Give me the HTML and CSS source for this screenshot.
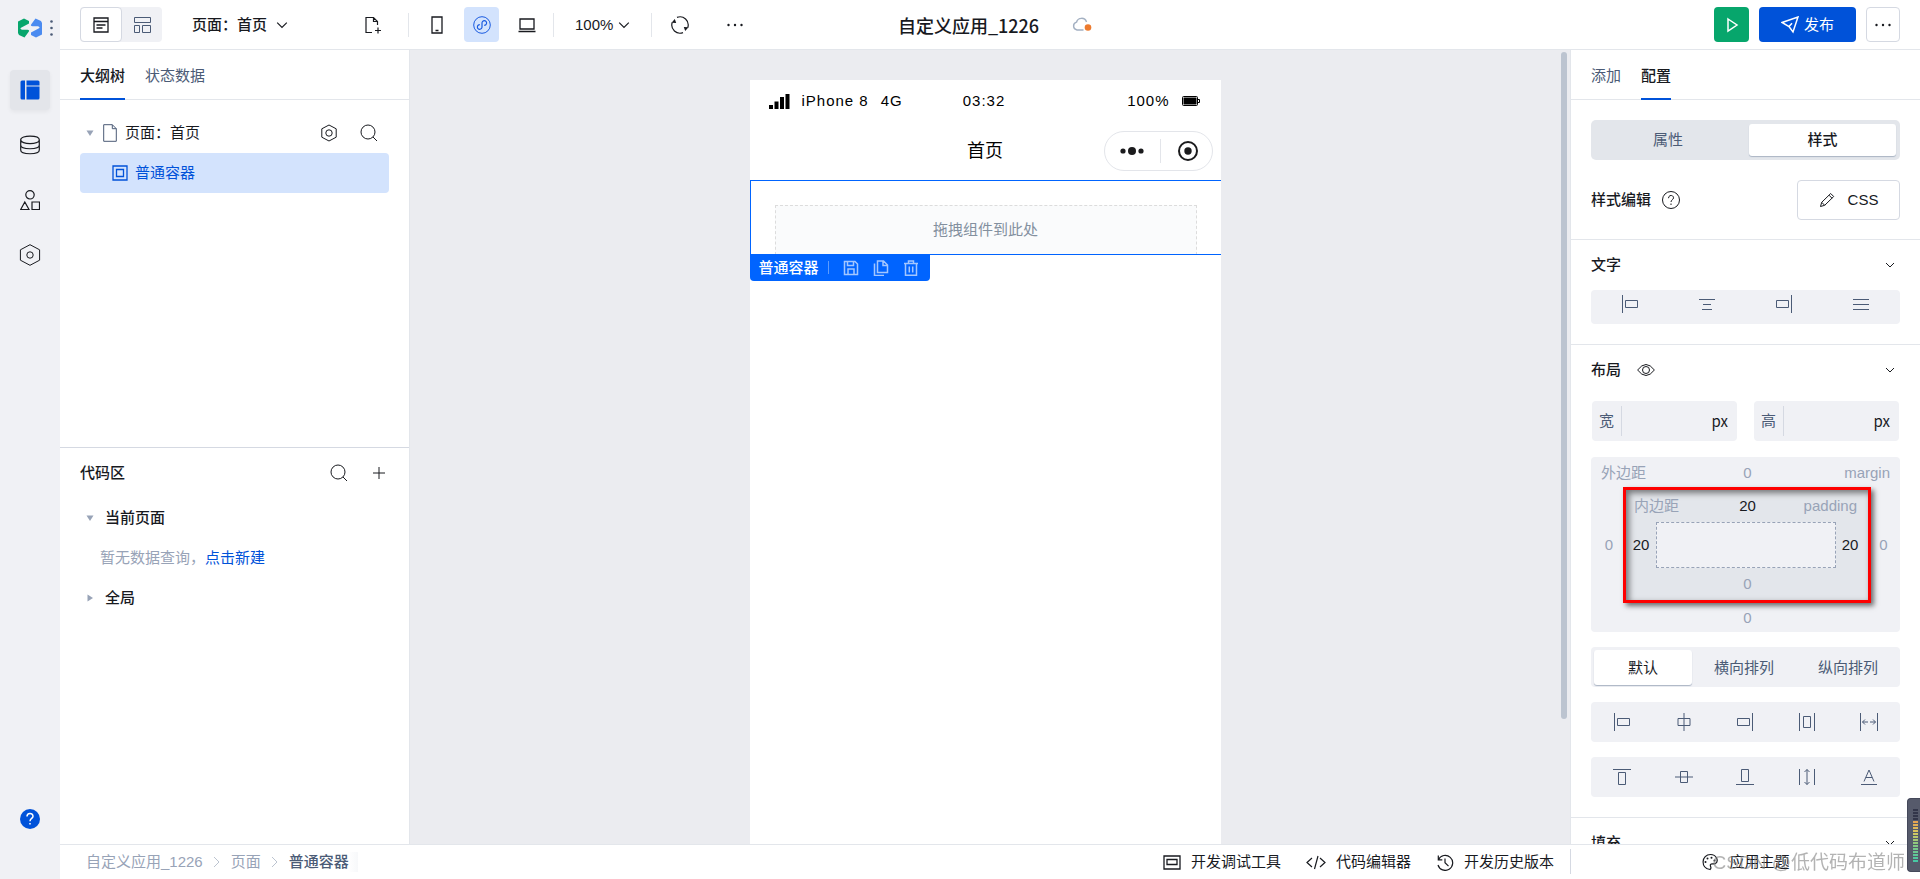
FILE: index.html
```html
<!DOCTYPE html>
<html lang="zh-CN">
<head>
<meta charset="utf-8">
<title>自定义应用_1226</title>
<link rel="stylesheet" href="styles.css">
</head>
<body>
<svg class="sprite" aria-hidden="true">
  <symbol id="chevron" viewBox="0 0 10 10"><path d="M1 3l4 4 4-4"/></symbol>
  <symbol id="crumb" viewBox="0 0 10 14"><path d="M2 2l5 5-5 5"/></symbol>
  <symbol id="search" viewBox="0 0 18 18"><circle cx="8" cy="8" r="7"/><path d="M13 13l4 4"/></symbol>
  <symbol id="more" viewBox="0 0 18 18"><g fill="currentColor" stroke="none"><circle cx="2.500" cy="9" r="1.200"/><circle cx="9" cy="9" r="1.200"/><circle cx="15.500" cy="9" r="1.200"/></g></symbol>
  <symbol id="caret-down" viewBox="0 0 8 8"><path fill="currentColor" stroke="none" d="M.5 1.500h7L4 7z"/></symbol>
  <symbol id="caret-right" viewBox="0 0 8 8"><path fill="currentColor" stroke="none" d="M1.500.5v7L7 4z"/></symbol>
  <symbol id="al-left" viewBox="0 0 18 18"><path d="M1.500 0v18M4.500 5.500h12v7h-12z"/></symbol>
  <symbol id="al-right" viewBox="0 0 18 18"><path d="M16.500 0v18M1.500 5.500h12v7h-12z"/></symbol>
</svg>
<div class="app">
  <nav class="rail" aria-label="主导航">
    <div class="brand">
      <svg class="logo" viewBox="0 0 24 20"><path id="half" fill="#07a66c" d="M0 3.500L6 .5 11 3v2.500L3 9.800q-1.500 1.200 1 2h5.500q2.500.4 1.200 2L6.500 19.500 1 17l-1-2z"/><path fill="#4b8bf0" transform="rotate(180 12 10)" d="M0 3.500L6 .5 11 3v2.500L3 9.800q-1.500 1.200 1 2h5.500q2.500.4 1.200 2L6.500 19.500 1 17l-1-2z"/></svg>
      <svg class="dots" viewBox="0 0 3 16"><circle cx="1.500" cy="1.500" r="1.300"/><circle cx="1.500" cy="8" r="1.300"/><circle cx="1.500" cy="14.500" r="1.300"/></svg>
    </div>
    <button class="tile tile-on" aria-label="页面设计"><svg class="i20" viewBox="0 0 20 20"><path fill="#0052d9" stroke="none" d="M2 .5h3v19H2a1.500 1.500 0 0 1-1.500-1.500V2A1.500 1.500 0 0 1 2 .5zM6.500.5H18A1.500 1.500 0 0 1 19.500 2v3.500h-13zM6.500 6.500h13V18a1.500 1.500 0 0 1-1.500 1.500H6.500z"/></svg></button>
    <button class="tile" aria-label="数据源"><svg class="i20" viewBox="0 0 20 20"><path stroke-width="1.200" d="M.7 4.800c0-5 18.600-5 18.600 0s-18.600 5-18.600 0zM.7 4.800v10.200c0 5 18.600 5 18.600 0V4.800M.7 10c0 5 18.600 5 18.600 0"/></svg></button>
    <button class="tile" aria-label="组件"><svg class="i20" viewBox="0 0 20 20"><path stroke-width="1.200" d="M10 .6a4.200 4.200 0 1 1 0 8.400 4.200 4.200 0 1 1 0-8.400zM.7 19.500L4.800 12l4.200 7.500zM12 12h7.500v7.500H12z"/></svg></button>
    <button class="tile" aria-label="设置"><svg class="i22" viewBox="0 0 22 22"><path d="M11 .7l9.600 5.100v10.400L11 21.300l-9.600-5.100V5.800z"/><circle cx="11" cy="11" r="3.200"/></svg></button>
    <button class="help" aria-label="帮助"><svg class="i20" viewBox="0 0 20 20"><circle cx="10" cy="10" r="10" fill="#0052d9" stroke="none"/><path stroke="#fff" stroke-width="1.500" d="M7 7.500c0-4 6-4 6-.3 0 2.200-3 2.300-3 5M10 14v1.600"/></svg></button>
  </nav>

  <header class="topbar">
    <div class="top-left">
      <div class="toggle">
        <button class="tg tg-on" aria-label="编辑"><svg class="i16" viewBox="0 0 16 16"><path stroke-width="1.300" d="M1 1h14v14H1zM1 4.500h14M3.500 8h9M3.500 11h6"/></svg></button>
        <button class="tg" aria-label="布局"><svg class="i18" viewBox="0 0 18 18"><path d="M1.500 1.500h16v5h-16zM1.500 9.500h5v7h-5zM9.500 9.500h8v7h-8z"/></svg></button>
      </div>
      <button class="page-pick">页面：首页<svg class="i12"><use href="#chevron"/></svg></button>
      <button class="sq" aria-label="新建页面"><svg class="i18" viewBox="0 0 18 18"><path stroke-width="1.200" d="M8 16.500H2v-15h7.500l4 4V9M9.500 1.500v4h4M14 11.500v6M11 14.500h6"/></svg></button>
      <span class="bar"></span>
      <div class="devices">
        <button class="sq" aria-label="手机"><svg class="i18" viewBox="0 0 18 18"><path stroke-width="1.300" d="M4 1h10v16H4zM7.500 14.500h3"/></svg></button>
        <button class="sq sq-on" aria-label="小程序"><svg class="i18" viewBox="0 0 18 18"><circle cx="9" cy="9" r="8.300"/><path stroke-width="1.200" d="M6.800 8.700a2.300 2.300 0 1 0 2.200 2.300V7a2.300 2.300 0 1 1 2.200 2.300"/></svg></button>
        <button class="sq" aria-label="电脑"><svg class="i18" viewBox="0 0 18 18"><path stroke-width="1.300" d="M2 3h14v10H2zM.5 15.500h17"/></svg></button>
      </div>
      <span class="bar"></span>
      <button class="zoom">100%<svg class="i12"><use href="#chevron"/></svg></button>
      <span class="bar"></span>
      <div class="acts">
        <button class="sq" aria-label="刷新"><svg class="i18" viewBox="0 0 18 18"><path stroke-width="1.200" d="M6 1.400A8.200 8.200 0 0 1 16.800 11.500M12 16.600A8.200 8.200 0 0 1 1.200 6.500"/><path fill="currentColor" stroke="none" d="M.5 6.800L3.800 3l1.400 4zM17.500 11.200L14.200 15l-1.400-4z"/></svg></button>
        <button class="sq" aria-label="更多"><svg class="i18"><use href="#more"/></svg></button>
      </div>
    </div>
    <div class="top-mid">
      <h1>自定义应用_1226</h1>
      <svg class="cloud" viewBox="0 0 20 15"><path stroke="#a3b0c2" stroke-width="1.400" d="M11.500 13H5a4 4 0 0 1-.5-7.800A5.200 5.200 0 0 1 14.500 5"/><circle cx="16" cy="10.500" r="3.300" fill="#ed7b2f" stroke="none"/></svg>
    </div>
    <div class="top-right">
      <button class="play" aria-label="预览"><svg class="i16" viewBox="0 0 16 16"><path stroke-width="1.500" d="M4 2l9 6-9 6z"/></svg></button>
      <button class="publish"><svg class="i18" viewBox="0 0 18 18"><path stroke-width="1.500" d="M1 6.500L17 1l-5 15-4-5.500zM8 10.500l3-3.200"/></svg>发布</button>
      <button class="outline" aria-label="更多操作"><svg class="i18"><use href="#more"/></svg></button>
    </div>
  </header>

  <aside class="left">
    <div class="tabs"><button class="tab tab-on">大纲树</button><button class="tab">状态数据</button></div>
    <div class="tree">
      <div class="row">
        <svg class="caret"><use href="#caret-down"/></svg>
        <svg class="doc" viewBox="0 0 14 18"><path stroke="#4b5b76" d="M.7.7h8.600l4 4v12.600H.7zM9.300.7v4h4"/></svg>
        <span class="grow">页面：首页</span>
        <button class="ico" aria-label="页面设置"><svg class="i18" viewBox="0 0 18 18"><path d="M9 1l7.200 3.800v8.400L9 17l-7.200-3.800V4.800z"/><circle cx="9" cy="9" r="3.200"/></svg></button>
        <button class="ico" aria-label="搜索"><svg class="i18"><use href="#search"/></svg></button>
      </div>
      <div class="row picked"><svg class="i16" viewBox="0 0 16 16"><path stroke-width="1.300" d="M1 1h14v14H1zM4.500 4.500h7v7h-7z"/></svg>普通容器</div>
    </div>
    <section class="code">
      <div class="code-head"><h2 class="grow">代码区</h2>
        <button class="ico" aria-label="搜索代码"><svg class="i18"><use href="#search"/></svg></button>
        <button class="ico" aria-label="新建"><svg class="i12" viewBox="0 0 12 12"><path d="M6 0v12M0 6h12"/></svg></button>
      </div>
      <div class="row strong"><svg class="caret"><use href="#caret-down"/></svg>当前页面</div>
      <p class="empty">暂无数据查询，<a href="#">点击新建</a></p>
      <div class="row strong"><svg class="caret"><use href="#caret-right"/></svg>全局</div>
    </section>
  </aside>

  <main class="stage">
    <div class="phone">
      <div class="status">
        <span class="carrier"><svg class="signal" viewBox="0 0 21 15"><path fill="#000" stroke="none" d="M0 11h4v4H0zM5.500 7.500h4V15h-4zM11 3h4v12h-4zM16.500 0h4v15h-4z"/></svg><span>iPhone 8</span><span>4G</span></span>
        <span>03:32</span>
        <span class="power">100%<svg class="battery" viewBox="0 0 18 10"><path stroke="#000" d="M1.500.5h13q1 0 1 1v7q0 1-1 1h-13q-1 0-1-1v-7q0-1 1-1zM16 3.500h1.500v3H16"/><path fill="#000" stroke="none" d="M1.500 1.500h13v7h-13z"/></svg></span>
      </div>
      <div class="navbar">
        <span class="nav-title">首页</span>
        <div class="capsule">
          <svg class="cap-dots" viewBox="0 0 24 8"><circle cx="3" cy="4" r="2.600"/><circle cx="12" cy="4" r="4"/><circle cx="21" cy="4" r="2.600"/></svg>
          <svg class="i20" viewBox="0 0 20 20"><circle cx="10" cy="10" r="9" stroke="#1b1b1d" stroke-width="2"/><circle cx="10" cy="10" r="3.700" fill="#1b1b1d" stroke="none"/></svg>
        </div>
      </div>
      <div class="container-sel"><div class="drop">拖拽组件到此处</div></div>
      <div class="tag"><span>普通容器</span>
        <button aria-label="保存"><svg class="i16" viewBox="0 0 16 16"><path stroke-width="1.500" d="M1.500 1.500h10.500l2.500 2.500v10.500h-13zM4.500 1.500v4h6v-4M5 14.500V9h6v5.500"/></svg></button>
        <button aria-label="复制"><svg class="i16" viewBox="0 0 16 16"><path stroke-width="1.500" d="M4.500 1h6l4 4v7.500h-10zM10 1v4.500h4.500M1.500 3.500v12H11"/></svg></button>
        <button aria-label="删除"><svg class="i16" viewBox="0 0 16 16"><path stroke-width="1.500" d="M1 3.500h14M5.500 3.500V1h5v2.500M2.500 3.500v11.700h11V3.500M6.300 6.500v6M9.700 6.500v6"/></svg></button>
      </div>
    </div>
    <div class="thumb"></div>
  </main>

  <aside class="right">
    <div class="tabs"><button class="tab">添加</button><button class="tab tab-on">配置</button></div>
    <div class="pane">
      <div class="seg2"><button>属性</button><button class="on">样式</button></div>
      <div class="style-row"><h3>样式编辑</h3><svg class="i18" viewBox="0 0 18 18"><circle cx="9" cy="9" r="8.500"/><path d="M6.500 7.200c0-3.700 5-3.500 5-.4 0 2-2.500 2-2.500 4.200M9 12.500v1.500"/></svg><span class="grow"></span>
        <button class="css"><svg class="i16" viewBox="0 0 16 16"><path d="M1.500 14.500l1.200-4.200 9-8.800 3 3-9 8.800zM10 3.200l3 3M2.700 10.300l3 3"/></svg>CSS</button></div>
    </div>
    <div class="pane">
      <div class="sec-head"><h3>文字</h3><span class="grow"></span><button class="fold" aria-label="收起文字"><svg class="i10"><use href="#chevron"/></svg></button></div>
      <div class="aligns short">
        <button aria-label="左对齐"><svg class="i18"><use href="#al-left"/></svg></button>
        <button aria-label="居中"><svg class="i18" viewBox="0 0 18 18"><path d="M1 4.500h16M5 9.500h8M4 14.500h10"/></svg></button>
        <button aria-label="右对齐"><svg class="i18"><use href="#al-right"/></svg></button>
        <button aria-label="两端对齐"><svg class="i18" viewBox="0 0 18 18"><path d="M1 4.500h16M1 9.500h16M1 14.500h16"/></svg></button>
      </div>
    </div>
    <div class="pane">
      <div class="sec-head"><h3>布局</h3><svg class="eye" viewBox="0 0 18 12"><path d="M.6 6Q9-5 17.400 6 9 17 .6 6z"/><circle cx="9" cy="6" r="3.500"/></svg><span class="grow"></span><button class="fold" aria-label="收起布局"><svg class="i10"><use href="#chevron"/></svg></button></div>
      <div class="sizes">
        <div class="size"><label for="w">宽</label><input id="w" type="text"><span class="unit">px</span></div>
        <div class="size"><label for="h">高</label><input id="h" type="text"><span class="unit">px</span></div>
      </div>
      <div class="box">
        <div class="edge"><span>外边距</span><input class="c" aria-label="上外边距" value="0"><span class="end">margin</span></div>
        <div class="mid">
          <input class="c" aria-label="左外边距" value="0">
          <div class="inner">
            <div class="edge"><span>内边距</span><input class="c set" aria-label="上内边距" value="20"><span class="end">padding</span></div>
            <div class="mid"><input class="c set" aria-label="左内边距" value="20"><div class="core"></div><input class="c set" aria-label="右内边距" value="20"></div>
            <div class="edge"><span></span><input class="c" aria-label="下内边距" value="0"><span></span></div>
          </div>
          <input class="c" aria-label="右外边距" value="0">
        </div>
        <div class="edge last"><span></span><input class="c" aria-label="下外边距" value="0"><span></span></div>
      </div>
      <div class="seg3"><button class="on">默认</button><button>横向排列</button><button>纵向排列</button></div>
      <div class="aligns">
        <button aria-label="水平居左"><svg class="i18"><use href="#al-left"/></svg></button>
        <button aria-label="水平居中"><svg class="i18" viewBox="0 0 18 18"><path d="M9 0v18M3 5.500h12v7H3z"/></svg></button>
        <button aria-label="水平居右"><svg class="i18"><use href="#al-right"/></svg></button>
        <button aria-label="水平分布"><svg class="i18" viewBox="0 0 18 18"><path d="M1.500 0v18M16.500 0v18M5.500 3.500h7v11h-7z"/></svg></button>
        <button aria-label="水平撑满"><svg class="i18" viewBox="0 0 18 18"><path d="M.5 0v18M17.500 0v18M2.500 9H8M5 6.500L2.500 9 5 11.500M15.500 9H10M13 6.500L15.500 9 13 11.500"/></svg></button>
      </div>
      <div class="aligns">
        <button aria-label="垂直居上"><svg class="i18" viewBox="0 0 18 18"><path d="M0 1.500h18M5.500 4.500h7v12h-7z"/></svg></button>
        <button aria-label="垂直居中"><svg class="i18" viewBox="0 0 18 18"><path d="M0 9h18M5.500 3.500h7v11h-7z"/></svg></button>
        <button aria-label="垂直居下"><svg class="i18" viewBox="0 0 18 18"><path d="M0 16.500h18M5.500 1.500h7v12h-7z"/></svg></button>
        <button aria-label="垂直分布"><svg class="i18" viewBox="0 0 18 18"><path d="M1.500 1v16M16.500 1v16M9 1.500v15M6.500 4L9 1.500 11.500 4M6.500 14L9 16.500l2.500-2.500"/></svg></button>
        <button aria-label="基线对齐"><svg class="i18" viewBox="0 0 18 18"><path d="M1 16.500h16M4 13.500L9 2l5 11.500M5.800 9.500h6.400"/></svg></button>
      </div>
    </div>
    <div class="pane">
      <div class="sec-head"><h3>填充</h3><span class="grow"></span><button class="fold" aria-label="收起填充"><svg class="i10"><use href="#chevron"/></svg></button></div>
    </div>
  </aside>

  <footer class="foot">
    <nav class="crumbs" aria-label="路径"><a href="#">自定义应用_1226</a><svg class="sep"><use href="#crumb"/></svg><a href="#">页面</a><svg class="sep"><use href="#crumb"/></svg><span class="here">普通容器</span></nav>
    <div class="tools">
      <button><svg class="i18" viewBox="0 0 18 18"><path stroke-width="1.300" d="M1 3h16v13H1zM4 6.500h10v5H4z"/></svg>开发调试工具</button>
      <button><svg class="i20" viewBox="0 0 20 20"><path stroke-width="1.200" d="M6 6l-5 4.500L6 15M14 6l5 4.500-5 4.500M12 4L8.500 17"/></svg>代码编辑器</button>
      <button><svg class="i18" viewBox="0 0 18 18"><path stroke-width="1.200" d="M2.500 6.500A7.500 7.500 0 1 1 2 12M2.300 2.500v4.300h4M9 5.500v4.200l3.500 3.500"/></svg>开发历史版本</button>
    </div>
    <div class="theme"><button><svg class="i18" viewBox="0 0 18 18"><path stroke-width="1.200" d="M9 16.500C-1 15 .5 1.500 9.500 1.500c6 0 8.500 6.500 5 9-1.500 1-4-.5-5 1-1 2 2 3-.5 5z"/><g fill="currentColor" stroke="none"><circle cx="4.500" cy="9" r="1"/><circle cx="6.500" cy="5.500" r="1"/><circle cx="10.500" cy="4.800" r="1"/><circle cx="13.500" cy="7.500" r="1"/></g></svg>应用主题</button></div>
  </footer>
</div>
<div class="watermark">CSDN @低代码布道师</div>
<div class="meter"><i></i></div>
</body>
</html>
```
FILE: styles.css
```css
* { box-sizing: border-box; }
body {
  margin: 0;
  font: 15px/20px "Liberation Sans", "Noto Sans CJK SC", sans-serif;
  color: #181a1f;
  background: #fff;
}
button, input { font: inherit; color: inherit; border: 0; padding: 0; margin: 0; background: none; }
button { display: inline-flex; align-items: center; justify-content: center; cursor: pointer; }
h1, h2, h3, p { margin: 0; }
h2, h3 { font-size: 15px; font-weight: 500; white-space: nowrap; }
a { text-decoration: none; }
svg { fill: none; stroke: currentColor; flex: none; display: block; }
.sprite { position: absolute; width: 0; height: 0; }
.i10 { width: 10px; height: 10px; }
.i12 { width: 12px; height: 12px; }
.i16 { width: 16px; height: 16px; }
.i18 { width: 18px; height: 18px; }
.i20 { width: 20px; height: 20px; }
.i22 { width: 22px; height: 22px; }
.grow { flex: 1; }

.app {
  height: 100vh;
  display: grid;
  grid-template-columns: 60px 350px minmax(0, 1fr) 350px;
  grid-template-rows: 50px minmax(0, 1fr) 35px;
}

/* rail */
.rail {
  grid-row: 1 / 4;
  background: #f0f1f5;
  display: flex;
  flex-direction: column;
  align-items: center;
  gap: 15px;
  padding-bottom: 50px;
}
.brand { height: 55px; display: flex; align-items: center; gap: 8px; align-self: flex-end; padding-right: 7px; }
.logo { width: 24px; height: 20px; stroke: none; }
.dots { width: 3px; height: 16px; fill: #4b5b76; stroke: none; }
.tile { width: 40px; height: 40px; border-radius: 4px; }
.tile-on { background: #e3e5ea; box-shadow: 0 2px 4px #0000000d; }
.help { margin-top: auto; }

/* top bar */
.topbar {
  grid-column: 2 / 5;
  display: flex;
  align-items: center;
  padding: 0 20px;
  border-bottom: 1px solid #e3e6eb;
}
.top-left, .top-right { flex: 1; display: flex; align-items: center; }
.toggle { display: flex; background: #f0f1f5; border-radius: 4px; margin-right: 30px; }
.tg { width: 40px; height: 35px; color: #4b5b76; }
.tg-on { width: 42px; background: #fff; border: 1px solid #d5d9e2; border-radius: 4px; color: #181a1f; }
.page-pick { gap: 9px; font-weight: 500; margin-right: 67px; }
.sq { width: 35px; height: 35px; border-radius: 4px; }
.sq-on { background: #d3e3fd; color: #1a5be0; }
.bar { width: 1px; height: 24px; background: #e3e6eb; }
.page-pick + .sq + .bar { margin-left: 18px; }
.devices { display: flex; gap: 10px; margin: 0 9px 0 10px; }
.zoom { gap: 5px; margin: 0 21px; }
.acts { display: flex; gap: 20px; margin-left: 10px; }
.top-mid { display: flex; align-items: center; gap: 33px; padding-left: 10px; }
h1 { font: 500 18px/24px "Noto Sans CJK SC", sans-serif; }
.cloud { width: 20px; height: 15px; }
.top-right { justify-content: flex-end; }
.play { width: 35px; height: 35px; background: #07a66c; color: #fff; border-radius: 4px; margin-right: 10px; }
.publish { width: 97px; height: 35px; gap: 5px; background: #0052d9; color: #fff; border-radius: 4px; margin-right: 10px; }
.outline { width: 34px; height: 35px; border: 1px solid #d5d9e2; border-radius: 4px; }

/* tabs */
.tabs { display: flex; gap: 20px; height: 50px; padding: 0 20px; border-bottom: 1px solid #e3e6eb; flex: none; }
.tab { height: 50px; padding-top: 3px; color: #4b5b76; border-bottom: 2px solid transparent; }
.tab-on { color: #181a1f; font-weight: 500; border-color: #0052d9; }

/* left panel */
.left { display: flex; flex-direction: column; border-right: 1px solid #e3e6eb; overflow: hidden; }
.tree { flex: 1; padding: 13px 20px; }
.row { display: flex; align-items: center; height: 40px; }
.row .caret { margin-left: 6px; }
.caret { width: 8px; height: 8px; color: #98a3b7; }
.doc { width: 14px; height: 18px; margin: 0 8px 0 9px; }
.ico { width: 40px; height: 40px; }
.picked { gap: 7px; padding-left: 32px; background: #d3e3fd; color: #0052d9; border-radius: 4px; }
.code { flex: none; height: 50%; border-top: 1px solid #d5d9e2; padding: 0 10px 0 20px; }
.code-head { display: flex; align-items: center; height: 50px; }
.strong { gap: 11px; font-weight: 500; }
.empty { line-height: 40px; padding-left: 20px; color: #98a3b7; }
.empty a { color: #0052d9; }

/* stage */
.stage {
  background: #ebecf0;
  display: flex;
  justify-content: center;
  padding: 30px 10px 0 0;
  position: relative;
  overflow: hidden;
}
.thumb { position: absolute; right: 3px; top: 2px; width: 6px; height: 84%; border-radius: 3px; background: #bcc4d0; }
.phone { width: 471px; background: #fff; color: #000; }
.status { display: grid; grid-template-columns: 1fr auto 1fr; align-items: center; height: 42px; padding: 0 21px 0 19px; letter-spacing: 1px; }
.carrier { display: flex; align-items: center; gap: 12px; }
.power { display: flex; align-items: center; justify-content: flex-end; gap: 12px; }
.signal { width: 21px; height: 15px; }
.battery { width: 18px; height: 10px; }
.navbar { display: grid; grid-template-columns: 1fr auto 1fr; align-items: center; height: 58px; padding: 0 8px; }
.nav-title { grid-column: 2; font-size: 18px; }
.capsule { justify-self: end; width: 109px; height: 40px; padding-left: 2px; border: 1px solid #e3e5ea; border-radius: 20px; display: grid; grid-template-columns: 50px 1fr; place-items: center; background: linear-gradient(#e3e5ea, #e3e5ea) 55px center / 1px 24px no-repeat; }
.capsule .i20 { margin-left: 8px; }
.cap-dots { width: 24px; height: 8px; fill: #1b1b1d; stroke: none; }
.container-sel { border: 1px solid #0064ff; border-right: 0; height: 75px; padding: 24px 24px 0; overflow: hidden; }
.drop { border: 1px dashed #dcdcdc; border-bottom: 0; background: #fafbfc; height: 50px; line-height: 48px; text-align: center; color: #83909f; }
.tag { display: inline-flex; align-items: center; gap: 14px; height: 27px; padding: 0 11px 0 9px; background: #0064ff; color: #fff; border-radius: 0 0 4px 4px; vertical-align: top; margin-top: -1px; }
.tag span { font-weight: 500; padding-right: 10px; background: linear-gradient(#5c9cff, #5c9cff) right / 1px 13px no-repeat; }
.tag button { color: #a3c6ff; }

/* right panel */
.right { display: flex; flex-direction: column; border-left: 1px solid #e3e6eb; overflow: hidden; }
.pane { flex: none; padding: 0 20px 20px; border-bottom: 1px solid #e3e6eb; }
.seg2 { display: grid; grid-template-columns: 154px 1fr; height: 40px; margin: 20px 0; padding: 4px; background: #e3e6eb; border-radius: 5px; color: #4b5b76; }
.seg2 button:first-child { padding-right: 8px; }
.on { background: #fff; color: #181a1f; border-radius: 3px; box-shadow: 0 1px 1px #aab4c4; }
.seg2 .on { font-weight: 500; }
.style-row { display: flex; align-items: center; gap: 11px; height: 39px; }
.css { width: 103px; height: 40px; gap: 13px; border: 1px solid #d5d9e2; border-radius: 4px; }
.sec-head { display: flex; align-items: center; gap: 16px; height: 50px; }
.eye { width: 18px; height: 12px; }
.fold { width: 20px; height: 20px; }
.aligns { display: flex; height: 40px; margin-top: 15px; background: #f0f1f5; border-radius: 4px; color: #4b5b76; }
.aligns button { flex: 1; }
.short { height: 34px; margin-top: 0; padding-bottom: 6px; }
.sizes { display: grid; grid-template-columns: minmax(0, 1fr) minmax(0, 1fr); gap: 17px; padding: 6px 1px 0; }
.size { display: flex; align-items: center; height: 40px; padding: 0 9px 0 7px; background: #f0f1f5; border-radius: 4px; }
.size label { color: #4b5b76; padding-right: 7px; line-height: 30px; border-right: 1px solid #d5d9e2; }
.size input { flex: 1; min-width: 0; width: 0; }
.unit { font-family: "Noto Sans CJK SC", sans-serif; }
.box { margin: 16px 0 15px; background: #f0f1f5; border-radius: 4px; color: #98a3b7; }
.box input { width: 100%; min-width: 0; text-align: center; line-height: 20px; height: 20px; }
.edge { display: grid; grid-template-columns: 1fr 40px 1fr; align-items: center; height: 32px; padding: 0 10px; }
.box .edge .c { padding-left: 4px; }
.end { text-align: right; }
.box .set { color: #181a1f; }
.mid { display: grid; grid-template-columns: 28px minmax(0, 1fr) 25px; align-items: center; }
.box > .mid { margin-top: -2px; padding: 0 4px; }
.inner { background: #e3e6eb; border: 3px solid #fe0000; box-shadow: 3px 3px 5px #0000008c, inset 3px 3px 6px #00000080; }
.inner .edge { padding: 0 11px 0 8px; }
.inner .mid { grid-template-columns: 30px minmax(0, 1fr) 28px; padding-right: 4px; }
.core { height: 46px; background: #f0f1f5; border: 1px dashed #98a3b7; }
.last { height: 29px; }
.seg3 { display: grid; grid-template-columns: 98px 1fr 1fr; height: 40px; padding: 3px 0 2px 3px; background: #f0f1f5; border-radius: 4px; color: #4b5b76; }

/* footer */
.foot { grid-column: 2 / 5; display: flex; border-top: 1px solid #e3e6eb; z-index: 1; background: #fff; }
.crumbs { flex: 1; display: flex; align-items: center; padding-left: 26px; gap: 9px; color: #98a3b7; }
.crumbs a { color: inherit; }
.here { color: #4b5b76; font-weight: 500; padding-right: 9px; background: linear-gradient(90deg, #fff, #f7f8fa) right / 10px no-repeat; }
.sep { width: 10px; height: 14px; color: #bcc4d0; }
.tools { display: flex; align-items: center; gap: 25px; padding-right: 16px; }
.tools button { gap: 10px; }
.theme { width: 350px; display: flex; justify-content: center; border-left: 1px solid #d5d9e2; margin: 4px 0 5px; }
.theme button { gap: 10px; }

/* overlays */
.watermark { position: fixed; right: 15px; bottom: 3px; font-size: 19px; line-height: 26px; color: #80808099; z-index: 2; }
.meter { position: fixed; right: 0; bottom: 7px; width: 13px; height: 74px; padding: 9px 2px 8px 5px; background: #565a6b; border: 1px solid #44485a; border-right: 0; border-radius: 4px 0 0 4px; z-index: 3; }
.meter i { display: block; height: 100%; background: repeating-linear-gradient(#565a6b 0 1px, transparent 1px 3px), linear-gradient(#33364a 22%, #e8a050 23%, #d8c860 45%, #8cc880 65%, #40c8a8); }
```
